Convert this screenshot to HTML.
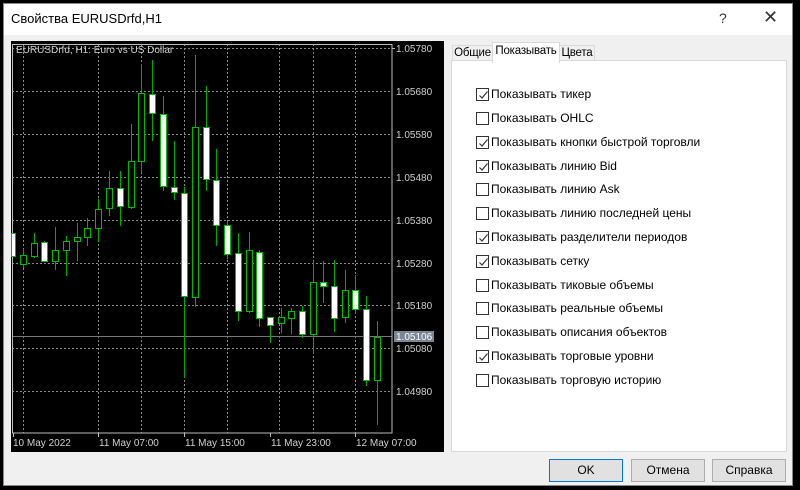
<!DOCTYPE html>
<html><head><meta charset="utf-8"><style>
*{margin:0;padding:0;box-sizing:border-box}
body{width:800px;height:490px;background:#000;position:relative;overflow:hidden;font-family:"Segoe UI","Liberation Sans",sans-serif;}
.dlg{position:absolute;left:3px;top:3px;width:790px;height:483px;background:#f0f0f0;border:1px solid #888;}
.title{position:absolute;left:0;top:0;width:100%;height:31px;background:#fff;font-size:13px;color:#000;}
.title .t{position:absolute;left:7px;top:7px;}
.title .q{position:absolute;left:715px;top:6px;font-size:14px;color:#333}
.title .x{position:absolute;left:759px;top:3px;font-size:18px;color:#333;font-weight:300}
.chart{position:absolute;left:7px;top:37px;}
.tabs{position:absolute;top:39px;height:19px;font-size:11.5px;}
.tab{position:absolute;top:0;height:19px;border:1px solid #d9d9d9;border-bottom:none;background:#f0f0f0;padding-top:2px;text-align:center;white-space:nowrap;letter-spacing:-0.2px}
.panel{position:absolute;left:447px;top:56px;width:336px;height:392px;background:#fff;border:1px solid #d9d9d9;}
.row{position:absolute;left:24px;height:14px;font-size:12px;color:#000;}
.cb{position:absolute;left:0;top:0;width:13px;height:13px;border:1px solid #333;background:#fff}
.cb svg{position:absolute;left:1px;top:1px}
.row span{position:absolute;left:15px;top:-1px;white-space:nowrap}
.btn{position:absolute;top:455px;height:23px;width:74px;border:1px solid #adadad;background:#e1e1e1;font-size:12px;text-align:center;line-height:21px}
</style></head><body>
<div class="dlg">
<div class="title"><span class="t">Свойства EURUSDrfd,H1</span><span class="q">?</span><span class="x">✕</span></div>
<svg class="chart" width="433" height="411" viewBox="10 40 433 411" font-family="Liberation Sans, sans-serif" font-size="10">
<rect x="10" y="40" width="433" height="411" fill="#000"/>
<g stroke="#8a8a8a" stroke-dasharray="2,2" stroke-width="1">
<line x1="11" x2="391" y1="47.5" y2="47.5"/><line x1="11" x2="391" y1="90.5" y2="90.5"/><line x1="11" x2="391" y1="133.5" y2="133.5"/><line x1="11" x2="391" y1="176.5" y2="176.5"/><line x1="11" x2="391" y1="219.5" y2="219.5"/><line x1="11" x2="391" y1="262.5" y2="262.5"/><line x1="11" x2="391" y1="304.5" y2="304.5"/><line x1="11" x2="391" y1="347.5" y2="347.5"/><line x1="11" x2="391" y1="390.5" y2="390.5"/>
<line x1="22.5" x2="22.5" y1="43" y2="432"/><line x1="97.5" x2="97.5" y1="43" y2="432"/><line x1="140.5" x2="140.5" y1="43" y2="432"/><line x1="183.5" x2="183.5" y1="43" y2="432"/><line x1="226.5" x2="226.5" y1="43" y2="432"/><line x1="278.5" x2="278.5" y1="43" y2="432"/><line x1="312.5" x2="312.5" y1="43" y2="432"/><line x1="354.5" x2="354.5" y1="43" y2="432"/>
</g>
<line x1="11" x2="391" y1="335.5" y2="335.5" stroke="#777"/>
<rect x="11.5" y="43.5" width="379.5" height="388.5" fill="none" stroke="#bbb"/>
<g stroke="#0a0" stroke-width="1">
<line x1="22.5" x2="22.5" y1="248" y2="267"/><line x1="33.5" x2="33.5" y1="232" y2="257"/><line x1="43.5" x2="43.5" y1="240" y2="261"/><line x1="54.5" x2="54.5" y1="226" y2="269"/><line x1="65.5" x2="65.5" y1="235" y2="275"/><line x1="76.5" x2="76.5" y1="222" y2="260"/><line x1="86.5" x2="86.5" y1="217" y2="245"/><line x1="97.5" x2="97.5" y1="198" y2="241"/><line x1="108.5" x2="108.5" y1="170" y2="215"/><line x1="119.5" x2="119.5" y1="170" y2="225"/><line x1="130.5" x2="130.5" y1="123" y2="208"/><line x1="140.5" x2="140.5" y1="63" y2="172"/><line x1="151.5" x2="151.5" y1="59" y2="140"/><line x1="162.5" x2="162.5" y1="95" y2="190"/><line x1="173.5" x2="173.5" y1="140" y2="199"/><line x1="183.5" x2="183.5" y1="186" y2="377"/><line x1="194.5" x2="194.5" y1="54" y2="306"/><line x1="205.5" x2="205.5" y1="85" y2="190"/><line x1="215.5" x2="215.5" y1="148" y2="245"/><line x1="226.5" x2="226.5" y1="220" y2="258"/><line x1="237.5" x2="237.5" y1="232" y2="320"/><line x1="248.5" x2="248.5" y1="231" y2="312"/><line x1="258.5" x2="258.5" y1="249" y2="326"/><line x1="269.5" x2="269.5" y1="316" y2="342"/><line x1="280.5" x2="280.5" y1="307" y2="332"/><line x1="290.5" x2="290.5" y1="307" y2="333"/><line x1="301.5" x2="301.5" y1="305" y2="337"/><line x1="312.5" x2="312.5" y1="260" y2="353"/><line x1="322.5" x2="322.5" y1="260" y2="302"/><line x1="333.5" x2="333.5" y1="259" y2="331"/><line x1="344.5" x2="344.5" y1="269" y2="322"/><line x1="354.5" x2="354.5" y1="274" y2="313"/><line x1="365.5" x2="365.5" y1="295" y2="385"/><line x1="376.5" x2="376.5" y1="320" y2="424"/>
</g>
<g stroke="#0b0" stroke-width="1">
<rect x="10.5" y="232.5" width="4" height="23" fill="#fff"/>
<rect x="19.5" y="254.5" width="6" height="9" fill="#000"/>
<rect x="30.5" y="242.5" width="6" height="13" fill="#000"/>
<rect x="40.5" y="241.5" width="6" height="19" fill="#fff"/>
<rect x="51.5" y="249.5" width="6" height="11" fill="#000"/>
<rect x="62.5" y="240.5" width="6" height="9" fill="#000"/>
<rect x="73.5" y="236.5" width="6" height="4" fill="#000"/>
<rect x="83.5" y="227.5" width="6" height="9" fill="#000"/>
<rect x="94.5" y="208.5" width="6" height="19" fill="#000"/>
<rect x="105.5" y="187.5" width="6" height="20" fill="#000"/>
<rect x="116.5" y="187.5" width="6" height="18" fill="#fff"/>
<rect x="127.5" y="160.5" width="6" height="46" fill="#000"/>
<rect x="137.5" y="92.5" width="6" height="68" fill="#000"/>
<rect x="148.5" y="93.5" width="6" height="19" fill="#fff"/>
<rect x="159.5" y="113.5" width="6" height="72" fill="#fff"/>
<rect x="170.5" y="186.5" width="6" height="5" fill="#fff"/>
<rect x="180.5" y="192.5" width="6" height="103" fill="#fff"/>
<rect x="191.5" y="126.5" width="6" height="170" fill="#000"/>
<rect x="202.5" y="126.5" width="6" height="52" fill="#fff"/>
<rect x="212.5" y="179.5" width="6" height="45" fill="#fff"/>
<rect x="223.5" y="224.5" width="6" height="29" fill="#fff"/>
<rect x="234.5" y="252.5" width="6" height="58" fill="#fff"/>
<rect x="245.5" y="249.5" width="6" height="61" fill="#000"/>
<rect x="255.5" y="251.5" width="6" height="66" fill="#fff"/>
<rect x="266.5" y="316.5" width="6" height="8" fill="#fff"/>
<rect x="277.5" y="316.5" width="6" height="6" fill="#000"/>
<rect x="287.5" y="310.5" width="6" height="7" fill="#000"/>
<rect x="298.5" y="310.5" width="6" height="23" fill="#fff"/>
<rect x="309.5" y="281.5" width="6" height="52" fill="#000"/>
<rect x="319.5" y="281.5" width="6" height="4" fill="#fff"/>
<rect x="330.5" y="285.5" width="6" height="32" fill="#fff"/>
<rect x="341.5" y="289.5" width="6" height="27" fill="#000"/>
<rect x="351.5" y="289.5" width="6" height="19" fill="#fff"/>
<rect x="362.5" y="308.5" width="6" height="71" fill="#fff"/>
<rect x="373.5" y="336.5" width="6" height="43" fill="#000"/>
</g>
<g fill="#d0d0d0">
<text x="15" y="52">EURUSDrfd, H1:  Euro vs US Dollar</text>
<text x="395" y="51">1.05780</text><text x="395" y="94">1.05680</text><text x="395" y="137">1.05580</text><text x="395" y="180">1.05480</text><text x="395" y="223">1.05380</text><text x="395" y="266">1.05280</text><text x="395" y="308">1.05180</text><text x="395" y="351">1.05080</text><text x="395" y="394">1.04980</text>
</g>
<rect x="393" y="330" width="40" height="11" fill="#7b8794"/>
<text x="395" y="339" fill="#fff">1.05106</text>
<g stroke="#bbb"><line x1="391" x2="394" y1="47.5" y2="47.5"/><line x1="12.5" x2="12.5" y1="432" y2="436"/><line x1="97.5" x2="97.5" y1="432" y2="436"/><line x1="183.5" x2="183.5" y1="432" y2="436"/><line x1="269.5" x2="269.5" y1="432" y2="436"/><line x1="354.5" x2="354.5" y1="432" y2="436"/></g>
<g fill="#d0d0d0"><text x="12" y="445">10 May 2022</text><text x="98" y="445">11 May 07:00</text><text x="184" y="445">11 May 15:00</text><text x="270" y="445">11 May 23:00</text><text x="355" y="445">12 May 07:00</text></g>
</svg>
<div class="tabs" style="left:448px;width:200px">
<div class="tab" style="left:0;width:41px;top:2px;height:17px;padding-top:1px">Общие</div>
<div class="tab" style="left:40px;width:68px;top:-1px;height:21px;background:#fff;z-index:2">Показывать</div>
<div class="tab" style="left:107px;width:36px;top:2px;height:17px;padding-top:1px">Цвета</div>
</div>
<div class="panel">
<div class="row" style="top:27px"><div class="cb"><svg width="11" height="11"><path d="M1.5 5.5 L4 8 L9.5 1.5" fill="none" stroke="#333" stroke-width="1.2"/></svg></div><span>Показывать тикер</span></div>
<div class="row" style="top:51px"><div class="cb"></div><span>Показывать OHLC</span></div>
<div class="row" style="top:75px"><div class="cb"><svg width="11" height="11"><path d="M1.5 5.5 L4 8 L9.5 1.5" fill="none" stroke="#333" stroke-width="1.2"/></svg></div><span>Показывать кнопки быстрой торговли</span></div>
<div class="row" style="top:99px"><div class="cb"><svg width="11" height="11"><path d="M1.5 5.5 L4 8 L9.5 1.5" fill="none" stroke="#333" stroke-width="1.2"/></svg></div><span>Показывать линию Bid</span></div>
<div class="row" style="top:122px"><div class="cb"></div><span>Показывать линию Ask</span></div>
<div class="row" style="top:146px"><div class="cb"></div><span>Показывать линию последней цены</span></div>
<div class="row" style="top:170px"><div class="cb"><svg width="11" height="11"><path d="M1.5 5.5 L4 8 L9.5 1.5" fill="none" stroke="#333" stroke-width="1.2"/></svg></div><span>Показывать разделители периодов</span></div>
<div class="row" style="top:194px"><div class="cb"><svg width="11" height="11"><path d="M1.5 5.5 L4 8 L9.5 1.5" fill="none" stroke="#333" stroke-width="1.2"/></svg></div><span>Показывать сетку</span></div>
<div class="row" style="top:218px"><div class="cb"></div><span>Показывать тиковые объемы</span></div>
<div class="row" style="top:241px"><div class="cb"></div><span>Показывать реальные объемы</span></div>
<div class="row" style="top:265px"><div class="cb"></div><span>Показывать описания объектов</span></div>
<div class="row" style="top:289px"><div class="cb"><svg width="11" height="11"><path d="M1.5 5.5 L4 8 L9.5 1.5" fill="none" stroke="#333" stroke-width="1.2"/></svg></div><span>Показывать торговые уровни</span></div>
<div class="row" style="top:313px"><div class="cb"></div><span>Показывать торговую историю</span></div>
</div>
<div class="btn" style="left:545px;border:1px solid #0078d7">OK</div>
<div class="btn" style="left:627px">Отмена</div>
<div class="btn" style="left:708px">Справка</div>
</div>
</body></html>
